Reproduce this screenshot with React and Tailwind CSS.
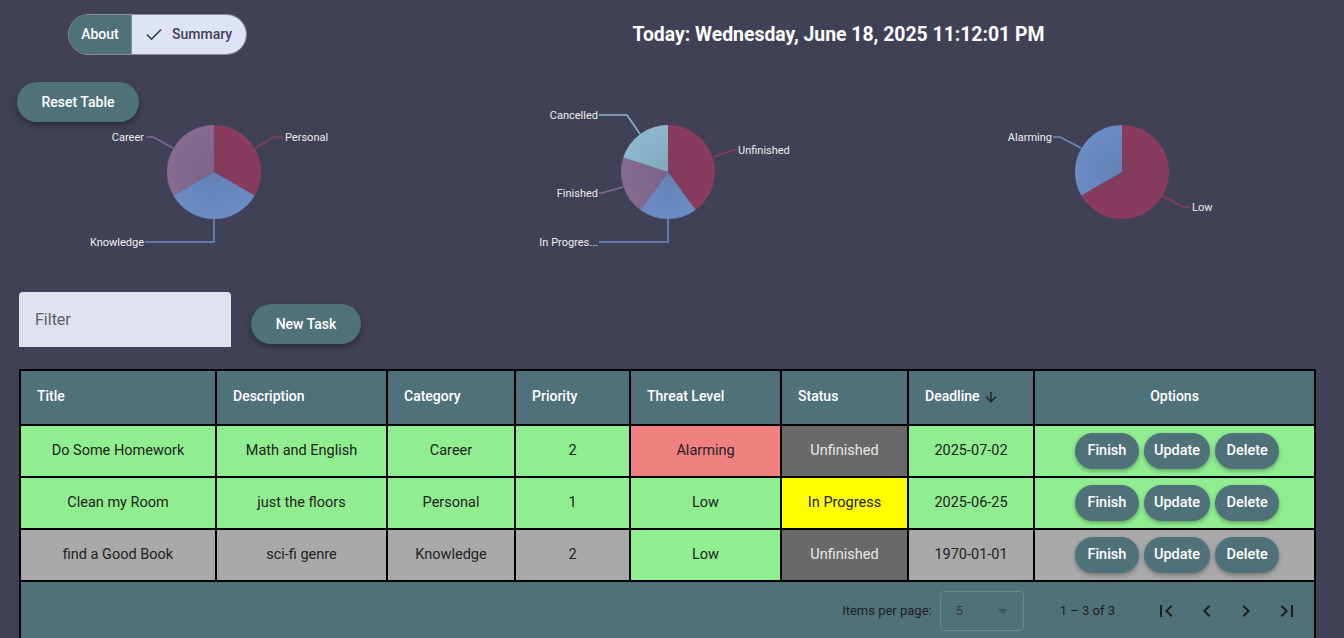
import { Check, ArrowDown } from 'lucide-react';

const RED = '#8b3b5d';
const BLUE = '#6b8cc4';
const PURPLE = '#866a90';
const SKY = '#8db8cc';

const toXY = (cx, cy, r, deg) => {
  const a = (deg * Math.PI) / 180;
  return [cx + r * Math.sin(a), cy - r * Math.cos(a)];
};

const arcPath = (cx, cy, r, start, end) => {
  const [x1, y1] = toXY(cx, cy, r, start);
  const [x2, y2] = toXY(cx, cy, r, end);
  const large = end - start > 180 ? 1 : 0;
  return `M${cx} ${cy} L${x1} ${y1} A${r} ${r} 0 ${large} 1 ${x2} ${y2} Z`;
};

function Pie({ id, cx, cy, slices, labels }) {
  return (
    <svg width="448" height="170" className="block">
      <defs>
        {slices.map((s, i) => (
          <radialGradient key={i} id={`${id}-g${i}`} cx={cx} cy={cy} r="47" gradientUnits="userSpaceOnUse">
            <stop offset="0%" stopColor={s.color} stopOpacity="0.85" />
            <stop offset="100%" stopColor={s.color} stopOpacity="1" />
          </radialGradient>
        ))}
      </defs>
      {slices.map((s, i) => (
        <path key={i} d={arcPath(cx, cy, 47, s.from, s.to)} fill={`url(#${id}-g${i})`} />
      ))}
      {labels.map((l, i) => (
        <g key={i}>
          <polyline points={l.points} fill="none" stroke={l.color} strokeWidth="1.5" />
          <text
            x={l.x}
            y={l.y + 1}
            textAnchor={l.anchor}
            dominantBaseline="middle"
            fill="#eeeeee"
            fontSize="11"
            fontFamily="Roboto, sans-serif"
          >
            {l.text}
          </text>
        </g>
      ))}
    </svg>
  );
}

const tasks = [
  { title: 'Do Some Homework', desc: 'Math and English', cat: 'Career', pri: 2, threat: 'Alarming', status: 'Unfinished', deadline: '2025-07-02', row: 'bg-[#90ee90]' },
  { title: 'Clean my Room', desc: 'just the floors', cat: 'Personal', pri: 1, threat: 'Low', status: 'In Progress', deadline: '2025-06-25', row: 'bg-[#90ee90]' },
  { title: 'find a Good Book', desc: 'sci-fi genre', cat: 'Knowledge', pri: 2, threat: 'Low', status: 'Unfinished', deadline: '1970-01-01', row: 'bg-[#a9a9a9]' },
];

const threatCls = (t) => (t === 'Alarming' ? 'bg-[#f08080] text-[#222]' : 'bg-[#90ee90] text-[#222]');
const statusCls = (s) => (s === 'In Progress' ? 'bg-[#ffff00] text-[#222]' : 'bg-[#696969] text-[#e8e8e8]');

function RowButton({ children }) {
  return (
    <button className="h-[36px] min-w-[64px] px-[10px] rounded-full bg-[#4f7179] text-white text-[14.5px] font-medium shadow-[0_2px_4px_rgba(0,0,0,0.3)]">
      {children}
    </button>
  );
}

export default function App() {
  return (
    <div className="min-h-screen bg-[#404156] font-['Roboto',sans-serif] pb-4">
      {/* top bar */}
      <div className="flex items-center pt-[14px]">
        <div className="ml-[68px] flex h-[41px] rounded-full border border-[#8a8c9c] overflow-hidden text-[14px] font-medium">
          <div className="w-[62px] flex items-center justify-center bg-[#4f7179] text-white">About</div>
          <div className="w-[115px] flex items-center gap-[8px] pl-[12px] bg-[#dfe3f8] text-[#3f4157] border-l border-[#8a8c9c]">
            <Check size={20} strokeWidth={2} className="text-[#3f4157]" />
            <span>Summary</span>
          </div>
        </div>
        <div className="flex-1 pl-[86px] pt-[1px] text-center text-white font-bold text-[19.4px]">
          Today: Wednesday, June 18, 2025 11:12:01 PM
        </div>
      </div>

      {/* reset */}
      <button className="mt-[27px] ml-[17px] h-[40px] w-[122px] rounded-full bg-[#4f7179] text-white text-[14px] font-medium shadow-[0_3px_6px_rgba(0,0,0,0.35)]">
        Reset Table
      </button>

      {/* charts */}
      <div className="grid grid-cols-3 -mt-[22px] h-[170px]">
        <Pie
          id="c1"
          cx={214}
          cy={72}
          slices={[
            { from: 0, to: 120, color: RED },
            { from: 120, to: 240, color: BLUE },
            { from: 240, to: 360, color: PURPLE },
          ]}
          labels={[
            { points: '255,48 274,37 283,37', color: RED, x: 285, y: 37, anchor: 'start', text: 'Personal' },
            { points: '214,119 214,142 145,142', color: BLUE, x: 144, y: 142, anchor: 'end', text: 'Knowledge' },
            { points: '173,48 153,37 146,37', color: PURPLE, x: 144, y: 37, anchor: 'end', text: 'Career' },
          ]}
        />
        <Pie
          id="c2"
          cx={220}
          cy={72}
          slices={[
            { from: 0, to: 144, color: RED },
            { from: 144, to: 216, color: BLUE },
            { from: 216, to: 288, color: PURPLE },
            { from: 288, to: 360, color: SKY },
          ]}
          labels={[
            { points: '265,57 285,50 289,50', color: RED, x: 290, y: 50, anchor: 'start', text: 'Unfinished' },
            { points: '220,119 220,142 151,142', color: BLUE, x: 150, y: 142, anchor: 'end', text: 'In Progres...' },
            { points: '175,87 154,93 151,93', color: PURPLE, x: 150, y: 93, anchor: 'end', text: 'Finished' },
            { points: '192,34 179,15 151,15', color: SKY, x: 150, y: 15, anchor: 'end', text: 'Cancelled' },
          ]}
        />
        <Pie
          id="c3"
          cx={226}
          cy={72}
          slices={[
            { from: 0, to: 240, color: RED },
            { from: 240, to: 360, color: BLUE },
          ]}
          labels={[
            { points: '267,96 287,107 294,107', color: RED, x: 296, y: 107, anchor: 'start', text: 'Low' },
            { points: '185,48 164,37 157,37', color: BLUE, x: 156, y: 37, anchor: 'end', text: 'Alarming' },
          ]}
        />
      </div>

      {/* filter + new task */}
      <div className="mt-[22px] ml-[19px] flex items-start gap-[20px]">
        <div className="w-[212px] h-[55px] bg-[#e0e3ef] rounded-t-[4px] flex items-center px-[16px] pt-[1px] text-[16px] text-[#5a5c66]">
          Filter
        </div>
        <button className="mt-[12px] h-[40px] w-[110px] rounded-full bg-[#4f7179] text-white text-[14px] font-medium shadow-[0_3px_6px_rgba(0,0,0,0.35)]">
          New Task
        </button>
      </div>

      {/* table */}
      <div className="mt-[22px] ml-[19px] w-[1297px] bg-[#4f7179]">
        <table className="w-full table-fixed border-collapse">
          <colgroup>
            <col className="w-[196px]" />
            <col className="w-[171px]" />
            <col className="w-[128px]" />
            <col className="w-[115px]" />
            <col className="w-[151px]" />
            <col className="w-[127px]" />
            <col className="w-[126px]" />
            <col />
          </colgroup>
          <thead>
            <tr className="h-[55px] bg-[#4f7179] text-white text-[14px] font-medium">
              <th className="border-2 border-black text-left pl-[16px] pb-[2px] font-medium">Title</th>
              <th className="border-2 border-black text-left pl-[16px] pb-[2px] font-medium">Description</th>
              <th className="border-2 border-black text-left pl-[16px] pb-[2px] font-medium">Category</th>
              <th className="border-2 border-black text-left pl-[16px] pb-[2px] font-medium">Priority</th>
              <th className="border-2 border-black text-left pl-[16px] pb-[2px] font-medium">Threat Level</th>
              <th className="border-2 border-black text-left pl-[16px] pb-[2px] font-medium">Status</th>
              <th className="border-2 border-black text-left pl-[16px] pb-[2px] font-medium">
                <span className="inline-flex items-center gap-[3px]">
                  Deadline
                  <ArrowDown size={16} strokeWidth={2} className="text-[#1e1e1e]" />
                </span>
              </th>
              <th className="border-2 border-black text-center pb-[2px] font-medium">Options</th>
            </tr>
          </thead>
          <tbody>
            {tasks.map((t) => (
              <tr key={t.title} className={`h-[52px] text-[14.5px] text-[#222] ${t.row}`}>
                <td className="border-2 border-black text-center">{t.title}</td>
                <td className="border-2 border-black text-center">{t.desc}</td>
                <td className="border-2 border-black text-center">{t.cat}</td>
                <td className="border-2 border-black text-center">{t.pri}</td>
                <td className={`border-2 border-black text-center ${threatCls(t.threat)}`}>{t.threat}</td>
                <td className={`border-2 border-black text-center ${statusCls(t.status)}`}>{t.status}</td>
                <td className="border-2 border-black text-center">{t.deadline}</td>
                <td className="border-2 border-black text-center">
                  <div className="flex justify-center gap-[5px] pl-[5px]">
                    <RowButton>Finish</RowButton>
                    <RowButton>Update</RowButton>
                    <RowButton>Delete</RowButton>
                  </div>
                </td>
              </tr>
            ))}
          </tbody>
        </table>

        {/* paginator */}
        <div className="h-[58px] border-x-2 border-black flex items-center justify-end text-[13px] text-[#1e1e1e]">
          <span className="mr-[8px]">Items per page:</span>
          <div className="w-[84px] h-[40px] border border-[#6c878d] rounded-[4px] flex items-center justify-between px-[15px] text-[#3a3a3a]">
            <span>5</span>
            <svg width="10" height="5" viewBox="0 0 10 5">
              <path d="M0 0 L5 5 L10 0 Z" fill="#3e5359" />
            </svg>
          </div>
          <span className="ml-[36px] mr-[39px]">1 – 3 of 3</span>
          <div className="flex items-center mr-[15px]">
            {[
              'M18.41 16.59L13.82 12l4.59-4.59L17 6l-6 6 6 6zM6 6h2v12H6z',
              'M15.41 7.41L14 6l-6 6 6 6 1.41-1.41L10.83 12z',
              'M10 6L8.59 7.41 13.17 12l-4.58 4.59L10 18l6-6z',
              'M5.59 7.41L10.18 12l-4.59 4.59L7 18l6-6-6-6zM16 6h2v12h-2z',
            ].map((d, i) => (
              <svg key={i} width="24" height="24" viewBox="0 0 24 24" className={i === 0 ? '' : i === 2 ? 'ml-[15px]' : 'ml-[17px]'}>
                <path d={d} fill="#1e1e1e" />
              </svg>
            ))}
          </div>
        </div>
      </div>
    </div>
  );
}
